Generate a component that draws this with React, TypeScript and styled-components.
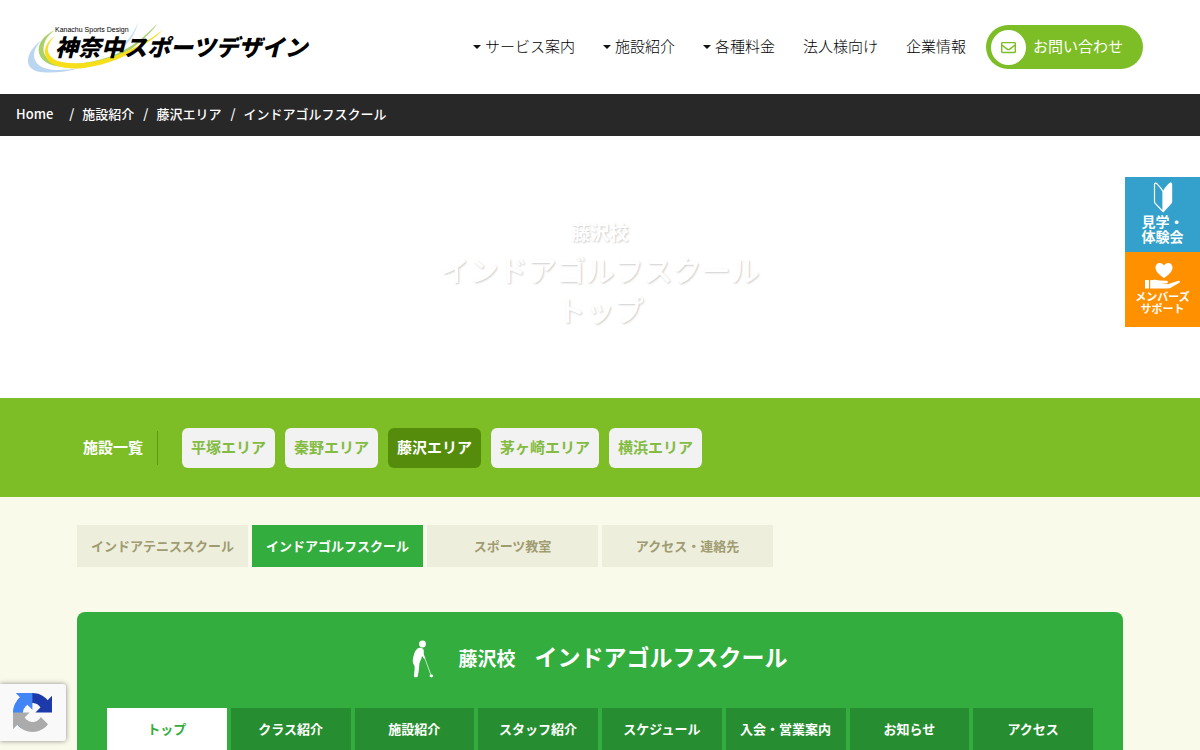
import React from "react";
import styled, { createGlobalStyle, css } from "styled-components";
import { FaRegEnvelope } from "react-icons/fa";

const latinFirst = `"Liberation Sans", "Noto Sans CJK JP", sans-serif`;

const GlobalStyle = createGlobalStyle`
  *, *::before, *::after { box-sizing: border-box; }
  body {
    margin: 0;
    background: #fafaea;
    color: #222;
    font-family: "Noto Sans CJK JP", "Liberation Sans", sans-serif;
    font-size: 15px;
    line-height: 20px;
  }
  a { color: inherit; text-decoration: none; }
  h1, h2, p, ul, ol { margin: 0; padding: 0; }
  ul, ol { list-style: none; }
`;

const Header = styled.header`
  display: flex;
  align-items: center;
  justify-content: space-between;
  min-height: 94px;
  padding: 0 57px 0 28px;
  background: #fff;
  font-family: ${latinFirst};
`;

const LogoLink = styled.a`
  position: relative;
  display: flex;
  flex-direction: column;
  padding: 3px 0 11px 27px;
  color: #000;
`;

const Swoosh = styled.svg`
  position: absolute;
  left: 0;
  top: 0;
  width: 140px;
  height: 52px;
`;

const LogoTagline = styled.span`
  position: relative;
  font-size: 7px;
  line-height: 10px;
`;

const LogoName = styled.span`
  position: relative;
  font-size: 23px;
  font-weight: 900;
  font-style: italic;
  line-height: 26px;
  white-space: nowrap;
`;

const Nav = styled.nav`
  display: flex;
  align-items: center;
  gap: 20px;
  white-space: nowrap;
`;

const NavList = styled.ul`
  display: flex;
  gap: 28px;
`;

const NavLink = styled.a`
  display: flex;
  align-items: center;
  gap: 4px;
  color: #000;
  font-weight: 300;
`;

const ContactLink = styled.a`
  display: flex;
  align-items: center;
  gap: 7px;
  height: 44px;
  padding: 0 20px 0 5px;
  border-radius: 22px;
  background: #7dbd26;
  color: #fff;
`;

const ContactIcon = styled.span`
  display: grid;
  place-items: center;
  width: 35px;
  height: 35px;
  border-radius: 50%;
  background: #fff;
  color: #7dbd26;
`;

const Breadcrumb = styled.nav`
  padding: 10px 16px 12px;
  background: #282828;
  color: #fff;
  font-size: 13px;
  font-weight: 500;
`;

const Crumbs = styled.ol`
  display: flex;
  flex-wrap: wrap;
`;

const Crumb = styled.li`
  & + &::before {
    content: "/";
    padding: 0 8px 0 9px;
  }
  &:first-child {
    padding-right: 7px;
  }
`;

const Hero = styled.section`
  min-height: 262px;
  padding: 80px 20px 66px;
  background: #fff;
  color: #fff;
  font-family: ${latinFirst};
  text-align: center;
  text-shadow: 1px 1px 2px rgba(0, 0, 0, 0.2);
`;

const HeroSchool = styled.p`
  font-size: 19px;
  font-weight: 700;
  line-height: 36px;
`;

const HeroTitle = styled.h1`
  font-size: 29px;
  font-weight: 500;
  line-height: 40px;
`;

const AreaBar = styled.section`
  background: #7dbd26;
  font-family: ${latinFirst};
`;

const Container = styled.div`
  max-width: 1086px;
  margin: 0 auto;
  padding: 0 20px;
`;

const AreaRow = styled(Container)`
  display: flex;
  align-items: center;
  min-height: 99px;
`;

const AreaLabel = styled.h2`
  margin: 0 24px 0 6px;
  padding-right: 14px;
  border-right: 1px solid #5a9a10;
  color: #fff;
  font-size: 15px;
  font-weight: 700;
  line-height: 34px;
`;

const AreaList = styled.ul`
  display: flex;
  flex-wrap: wrap;
  gap: 10px;
`;

const AreaLink = styled.a<{ $active?: boolean }>`
  display: block;
  padding: 0 9px;
  border-radius: 6px;
  background: ${(p) => (p.$active ? "#558c0c" : "#f2f2f2")};
  color: ${(p) => (p.$active ? "#fff" : "#84bb41")};
  font-weight: 700;
  line-height: 40px;
`;

const SchoolTabs = styled.ul`
  display: grid;
  grid-template-columns: repeat(6, 1fr);
  gap: 4px;
  padding: 28px 0 45px;
`;

const SchoolTab = styled.a<{ $active?: boolean }>`
  display: block;
  background: ${(p) => (p.$active ? "#32ad3e" : "#eeeedd")};
  color: ${(p) => (p.$active ? "#fff" : "#9f9c72")};
  font-size: 13px;
  font-weight: 700;
  line-height: 42px;
  text-align: center;
  white-space: nowrap;
`;

const Panel = styled.section`
  padding: 0 30px;
  border-radius: 8px 8px 0 0;
  background: #32ad3e;
  color: #fff;
`;

const PanelHeading = styled.div`
  display: flex;
  align-items: center;
  justify-content: center;
  height: 96px;
  padding-bottom: 2px;
`;

const PanelTitle = styled.h2`
  display: flex;
  align-items: baseline;
  gap: 19px;
  margin-left: 24px;
  font-family: ${latinFirst};
  font-size: 23px;
  font-weight: 700;
  line-height: 32px;
`;

const PanelSchool = styled.span`
  font-size: 19px;
`;

const PageTabs = styled.ul`
  display: grid;
  grid-template-columns: repeat(8, 1fr);
  gap: 4px;
`;

const PageTab = styled.a<{ $active?: boolean }>`
  display: block;
  background: #268e30;
  font-size: 13px;
  font-weight: 700;
  line-height: 42px;
  text-align: center;
  white-space: nowrap;
  ${(p) =>
    p.$active &&
    css`
      background: #fff;
      color: #32ad3e;
    `}
`;

const SideLinks = styled.aside`
  position: fixed;
  top: 177px;
  right: 0;
  width: 75px;
  font-family: ${latinFirst};
`;

const SideLink = styled.a<{ $color: string; $small?: boolean }>`
  display: flex;
  flex-direction: column;
  align-items: center;
  height: 75px;
  padding-top: ${(p) => (p.$small ? "10px" : "5px")};
  background: ${(p) => p.$color};
  color: #fff;
  font-size: ${(p) => (p.$small ? "11px" : "14px")};
  font-weight: 700;
  line-height: ${(p) => (p.$small ? "12px" : "15px")};
  text-align: center;

  svg {
    flex: none;
    margin-bottom: 2px;
  }
`;

const CaptchaBadge = styled.div`
  position: fixed;
  left: 0;
  bottom: 9px;
  display: flex;
  align-items: center;
  width: 66px;
  height: 57px;
  padding-left: 13px;
  border-radius: 0 3px 3px 0;
  background: #f9f9f9;
  box-shadow: 0 0 5px #888;
`;

const Caret = () => (
  <svg width="8" height="4" viewBox="0 0 8 4" aria-hidden="true">
    <path d="M0 0h8L4 4z" fill="#111" />
  </svg>
);

const SwooshArt = () => (
  <Swoosh viewBox="0 0 140 52" aria-hidden="true">
    <path
      d="M14 18C5 24 0 32 0 39c0 8 8 12 21 11.500C31 50.500 42 49 51 46c-12 2-24 3-33 .5C4 43 2 29 14 18z"
      fill="#b9d5ef"
    />
    <path d="M110 0c-2 11-8 20-18 28l-6 3C97 22 106 12 110 0z" fill="#c9e0f3" />
    <path
      d="M27 8C16 13 9 22 11 31c3 11 16 15 34 14 26-1 52-11 67-25 8-7 14-13 17-18-6 6-12 12-20 18-16 12-40 21-64 22-15 .5-26-3-29-11-2-8 2-17 11-23z"
      fill="#a9d069"
    />
    <path
      d="M27 14c-9 6-12 14-9 21 4 9 19 13 38 11 22-3 45-12 61-24 8-5 14-10 18-14-7 5-13 9-20 13-17 10-39 18-60 20-17 1-30-1-34-9-3-6 0-12 6-18z"
      fill="#f7df1c"
    />
  </Swoosh>
);

const Golfer = () => (
  <svg width="22" height="38" viewBox="0 0 22 38" aria-hidden="true">
    <circle cx="10.5" cy="4" r="3.4" fill="#fff" />
    <path
      d="M5.5 8.5C7 7.2 10 7.4 11.2 9c.8 1.2.6 3.2.6 5.5l1.6 3.6-1 1-2.4-3.2-.8 3.2L7.500 23c-.4 3.5-.6 9-1.7 13.2-.4 1.6-3.9 1.500-3.900-.2.2-3 .9-6.500.7-9.800C1.600 24 .4 22.500.8 20c.5-4 2-9.500 4.700-11.500z"
      fill="#fff"
    />
    <path d="M12.5 17.500L19 35" stroke="#fff" strokeWidth="0.700" fill="none" />
    <path d="M17.800 34.800l2.600-.4 1 1.600-1.800 1.400-2-.8z" fill="#fff" />
  </svg>
);

const BeginnerMark = () => (
  <svg width="20" height="31" viewBox="0 0 20 31" aria-hidden="true">
    <path
      d="M1.500 2.200c.3-1.200 1.500-1.400 2.300-.6C6 3.800 8.500 6.500 10 9.500V29.500L2.200 21.300c-.5-.6-.7-1.100-.7-1.800z"
      fill="none"
      stroke="#fff"
      strokeWidth="1.200"
      strokeLinejoin="round"
    />
    <path
      d="M10 9c1.500-3 4-6 6.300-8.100 1.100-.9 2.900-.5 2.900 1.100v17.500c0 .9-.3 1.500-.9 2.200L10 30.700z"
      fill="#fff"
    />
  </svg>
);

const HeartHand = () => (
  <svg width="36" height="27" viewBox="0 0 36 27" aria-hidden="true">
    <path
      d="M19 16C14 12.500 10.500 9.500 10.500 5.500 10.500 3 12.300 1 14.800 1c1.800 0 3.300 1 4.200 2.600C19.900 2 21.400 1 23.200 1c2.500 0 4.300 2 4.300 4.500 0 4-3.500 7-8.500 10.500z"
      fill="#fff"
    />
    <path d="M0 18h4v8.500H0z" fill="#fff" />
    <path
      d="M5.200 18.300c3.500-1 6.300-.8 9.300.3l7.300.2c1.600.1 1.600 2.200 0 2.400l-5.800.6 7.500.2 9.300-3.100c1.800-.6 3 .8 1.500 1.900l-8.500 5c-.9.500-1.600.7-2.700.7H5.200z"
      fill="#fff"
    />
  </svg>
);

const CaptchaLogo = () => (
  <svg width="39" height="39" viewBox="0 0 64 64" role="img" aria-label="reCAPTCHA">
    <path
      fill="#1c3aa9"
      d="M64 31.955l-.033-1.370V4.687l-7.160 7.160C50.948 4.674 42.033.093 32.050.093c-10.400 0-19.622 4.960-25.458 12.640l11.736 11.860a15.550 15.550 0 0 1 4.754-5.334c2.050-1.600 4.952-2.906 8.968-2.906.485 0 .86.057 1.135.163 4.976.393 9.288 3.140 11.828 7.124l-8.307 8.307L64 31.953"
    />
    <path
      fill="#4285f4"
      d="M31.862.094l-1.370.033H4.594l7.160 7.160C4.580 13.147 0 22.060 0 32.046c0 10.400 4.960 19.622 12.640 25.458L24.500 45.768a15.550 15.550 0 0 1-5.334-4.754c-1.600-2.050-2.906-4.952-2.906-8.968 0-.485.057-.86.163-1.135.393-4.976 3.140-9.288 7.124-11.828l8.307 8.307L31.860.095"
    />
    <path
      fill="#ababab"
      d="M.001 32.045l.033 1.370v25.898l7.160-7.160c5.860 7.173 14.774 11.754 24.760 11.754 10.400 0 19.622-4.960 25.458-12.640l-11.736-11.860a15.550 15.550 0 0 1-4.754 5.334c-2.050 1.600-4.952 2.906-8.968 2.906-.485 0-.86-.057-1.135-.163-4.976-.393-9.288-3.140-11.828-7.124l8.307-8.307c-10.522.040-22.400.066-27.295-.005"
    />
  </svg>
);

const navItems = [
  { label: "サービス案内", menu: true },
  { label: "施設紹介", menu: true },
  { label: "各種料金", menu: true },
  { label: "法人様向け", menu: false },
  { label: "企業情報", menu: false },
];
const crumbs = ["Home", "施設紹介", "藤沢エリア", "インドアゴルフスクール"];
const areas = ["平塚エリア", "秦野エリア", "藤沢エリア", "茅ヶ崎エリア", "横浜エリア"];
const schools = [
  "インドアテニススクール",
  "インドアゴルフスクール",
  "スポーツ教室",
  "アクセス・連絡先",
];
const pages = [
  "トップ",
  "クラス紹介",
  "施設紹介",
  "スタッフ紹介",
  "スケジュール",
  "入会・営業案内",
  "お知らせ",
  "アクセス",
];

export default function App() {
  return (
    <>
      <GlobalStyle />
      <Header>
        <LogoLink href="#">
          <SwooshArt />
          <LogoTagline>Kanachu Sports Design</LogoTagline>
          <LogoName>神奈中スポーツデザイン</LogoName>
        </LogoLink>
        <Nav>
          <NavList>
            {navItems.map((item) => (
              <li key={item.label}>
                <NavLink href="#">
                  {item.menu && <Caret />}
                  {item.label}
                </NavLink>
              </li>
            ))}
          </NavList>
          <ContactLink href="#">
            <ContactIcon>
              <FaRegEnvelope size={15} />
            </ContactIcon>
            お問い合わせ
          </ContactLink>
        </Nav>
      </Header>
      <Breadcrumb>
        <Crumbs>
          {crumbs.map((label) => (
            <Crumb key={label}>
              <a href="#">{label}</a>
            </Crumb>
          ))}
        </Crumbs>
      </Breadcrumb>
      <main>
        <Hero>
          <HeroSchool>藤沢校</HeroSchool>
          <HeroTitle>
            インドアゴルフスクール
            <br />
            トップ
          </HeroTitle>
        </Hero>
        <AreaBar>
          <AreaRow>
            <AreaLabel>施設一覧</AreaLabel>
            <AreaList>
              {areas.map((label) => (
                <li key={label}>
                  <AreaLink href="#" $active={label === "藤沢エリア"}>
                    {label}
                  </AreaLink>
                </li>
              ))}
            </AreaList>
          </AreaRow>
        </AreaBar>
        <Container>
          <SchoolTabs>
            {schools.map((label) => (
              <li key={label}>
                <SchoolTab href="#" $active={label === "インドアゴルフスクール"}>
                  {label}
                </SchoolTab>
              </li>
            ))}
          </SchoolTabs>
          <Panel>
            <PanelHeading>
              <Golfer />
              <PanelTitle>
                <PanelSchool>藤沢校</PanelSchool>
                インドアゴルフスクール
              </PanelTitle>
            </PanelHeading>
            <PageTabs>
              {pages.map((label) => (
                <li key={label}>
                  <PageTab href="#" $active={label === "トップ"}>
                    {label}
                  </PageTab>
                </li>
              ))}
            </PageTabs>
          </Panel>
        </Container>
      </main>
      <SideLinks>
        <SideLink href="#" $color="#33a1cb">
          <BeginnerMark />
          <span>
            見学・
            <br />
            体験会
          </span>
        </SideLink>
        <SideLink href="#" $color="#ff9000" $small>
          <HeartHand />
          <span>
            メンバーズ
            <br />
            サポート
          </span>
        </SideLink>
      </SideLinks>
      <CaptchaBadge>
        <CaptchaLogo />
      </CaptchaBadge>
    </>
  );
}
